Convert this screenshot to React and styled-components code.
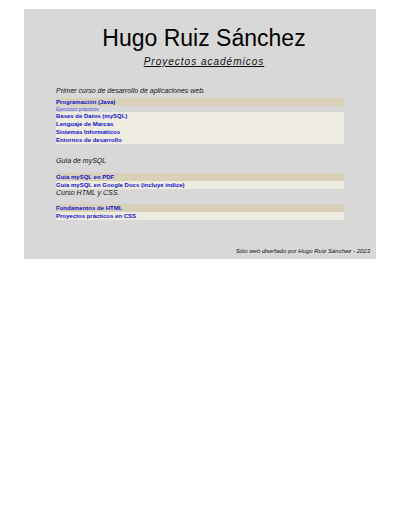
import React from "react";
import styled, { createGlobalStyle } from "styled-components";

const GlobalStyle = createGlobalStyle`
  body {
    margin: 0;
    background: #fff;
    color: #111;
    font-family: "Liberation Sans", Arial, sans-serif;
  }
`;

const Page = styled.main`
  margin: 9px 24px 0;
  padding: 14px 32px 4px;
  background: #d8d8d8;
`;

const Header = styled.header`
  padding-left: 8px;
  text-align: center;
`;

const Name = styled.h1`
  margin: 0;
  font-size: 23px;
  line-height: 30px;
  font-weight: 400;
  color: #000;
`;

const Subtitle = styled.h2`
  margin: 0 0 16px;
  font-size: 10px;
  line-height: 18px;
  font-weight: 400;
  font-style: italic;
  letter-spacing: 1px;
  text-decoration: underline;
`;

const Section = styled.section`
  margin-bottom: ${(p) => p.$after || 0}px;
`;

const SectionTitle = styled.h3`
  margin: 0 0 ${(p) => p.$gap}px;
  font-size: 7px;
  line-height: 8px;
  font-weight: 400;
  font-style: italic;
`;

const List = styled.ul`
  margin: 0;
  padding: 0;
  list-style: none;
`;

const Item = styled.li`
  font-size: 6px;
  line-height: 8px;
  font-weight: 700;
  background: ${(p) => (p.$first ? "#d8d0b8" : "#eeece0")};
`;

const SubItem = styled.li`
  font-size: 5px;
  line-height: 6px;
  background: #d8d8d8;
`;

const Link = styled.a`
  display: block;
  color: ${(p) => (p.$soft ? "#5050d0" : "#1410d0")};
  text-decoration: none;
`;

const Footer = styled.footer`
  margin: 27px -26px 0 0;
  font-size: 6px;
  line-height: 8px;
  font-style: italic;
  text-align: right;
`;

const sections = [
  {
    title: "Primer curso de desarrollo de aplicaciones web.",
    gap: 3,
    after: 13,
    items: [
      { text: "Programación (Java)", sub: "Ejercicios prácticos" },
      { text: "Bases de Datos (mySQL)" },
      { text: "Lenguaje de Marcas" },
      { text: "Sistemas Informáticos" },
      { text: "Entornos de desarrollo" },
    ],
  },
  {
    title: "Guía de mySQL",
    gap: 8,
    items: [
      { text: "Guía mySQL en PDF" },
      { text: "Guía mySQL en Google Docs (incluye índice)" },
    ],
  },
  {
    title: "Curso HTML y CSS.",
    gap: 7,
    items: [
      { text: "Fundamentos de HTML" },
      { text: "Proyectos prácticos en CSS" },
    ],
  },
];

export default function App() {
  return (
    <>
      <GlobalStyle />
      <Page>
        <Header>
          <Name>Hugo Ruiz Sánchez</Name>
          <Subtitle>Proyectos académicos</Subtitle>
        </Header>
        {sections.map((section) => (
          <Section key={section.title} $after={section.after}>
            <SectionTitle $gap={section.gap}>{section.title}</SectionTitle>
            <List>
              {section.items.map((item, i) => (
                <React.Fragment key={item.text}>
                  <Item $first={i === 0}>
                    <Link href="#">{item.text}</Link>
                  </Item>
                  {item.sub && (
                    <SubItem>
                      <Link href="#" $soft>{item.sub}</Link>
                    </SubItem>
                  )}
                </React.Fragment>
              ))}
            </List>
          </Section>
        ))}
        <Footer>Sitio web diseñado por Hugo Ruiz Sánchez - 2023</Footer>
      </Page>
    </>
  );
}
